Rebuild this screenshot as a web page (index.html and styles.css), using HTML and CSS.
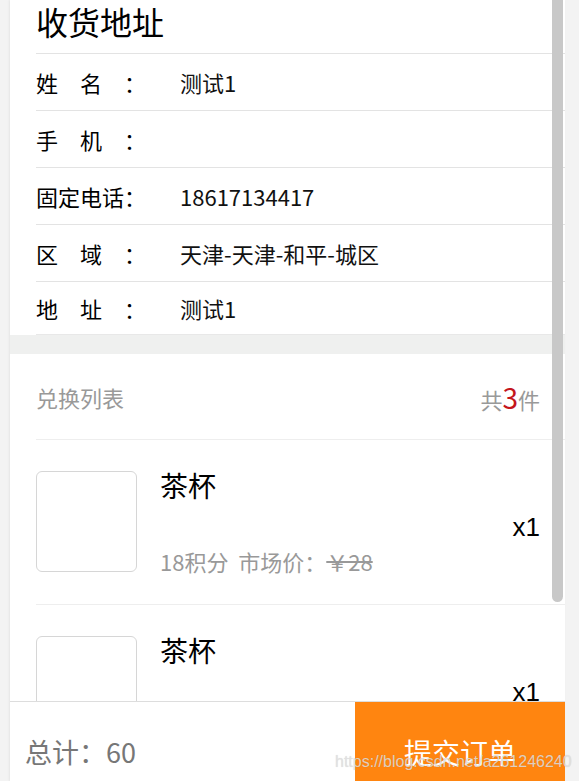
FILE: index.html
```html
<!DOCTYPE html>
<html lang="zh-CN">

<head>
    <meta charset="UTF-8">
    <meta name="viewport" content="width=device-width, initial-scale=1.0">
    <title>确认订单</title>
    <link rel="stylesheet" href="styles.css">
</head>

<body>
    <div class="page">
        <div class="content">
            <div class="address">
                <h2 class="title">收货地址</h2>
                <div class="row">
                    <span class="label">姓名：</span>
                    <span class="value">测试1</span>
                </div>
                <div class="row">
                    <span class="label">手机：</span>
                    <span class="value"></span>
                </div>
                <div class="row">
                    <span class="label">固定电话：</span>
                    <span class="value">18617134417</span>
                </div>
                <div class="row">
                    <span class="label">区域：</span>
                    <span class="value">天津-天津-和平-城区</span>
                </div>
                <div class="row last">
                    <span class="label">地址：</span>
                    <span class="value">测试1</span>
                </div>
            </div>

            <div class="gap"></div>

            <div class="goods">
                <div class="goods-head">
                    <span>兑换列表</span>
                    <span class="count">共<em>3</em>件</span>
                </div>
                <div class="item">
                    <div class="pic"></div>
                    <div class="info">
                        <p class="name">茶杯</p>
                        <p class="price">18积分&nbsp;&nbsp;市场价：<del>￥28</del></p>
                    </div>
                    <div class="num">x1</div>
                </div>
                <div class="item">
                    <div class="pic"></div>
                    <div class="info">
                        <p class="name">茶杯</p>
                        <p class="price">18积分&nbsp;&nbsp;市场价：<del>￥28</del></p>
                    </div>
                    <div class="num">x1</div>
                </div>
            </div>

            <div class="thumb"></div>
        </div>

        <div class="footer">
            <div class="total">总计：60</div>
            <button class="submit">提交订单</button>
        </div>
    </div>
    <div class="mark">https://blog.csdn.net/a261246240</div>
</body>

</html>
```

FILE: styles.css
```css
* {
    margin: 0;
    padding: 0;
    box-sizing: border-box;
}

body {
    position: relative;
    background-color: #f3f3f3;
    font-family: "Noto Sans CJK SC", "Noto Sans", sans-serif;
    color: #111;
}

.page {
    width: 555px;
    height: 781px;
    margin-left: 10px;
    background-color: #fff;
    box-shadow: -1px 0 2px rgba(0, 0, 0, 0.06);
    display: flex;
    flex-direction: column;
    overflow: hidden;
}

.content {
    position: relative;
    flex: 1;
    overflow: hidden;
}

.address {
    padding-left: 26px;
}

.title {
    height: 54px;
    padding-top: 1px;
    font-size: 32px;
    font-weight: normal;
    line-height: 40px;
    color: #000;
    border-bottom: 1px solid #e3e3e3;
}

.row {
    display: flex;
    align-items: center;
    height: 57px;
    font-size: 22px;
    border-bottom: 1px solid #e3e3e3;
}

.row.last {
    height: 53px;
    border-bottom-color: #e8e8e8;
}

.label {
    width: 110px;
    margin-right: 34px;
    color: #000;
    text-align: justify;
    text-align-last: justify;
}

.value {
    color: #111;
}

.gap {
    height: 19px;
    background-color: #eff0ef;
}

.goods {
    padding-left: 26px;
}

.goods-head {
    display: flex;
    justify-content: space-between;
    align-items: center;
    height: 86px;
    padding-right: 25px;
    font-size: 22px;
    color: #999;
    border-bottom: 1px solid #eee;
}

.count em {
    font-style: normal;
    font-size: 28px;
    color: #c4161c;
}

.item {
    display: flex;
    align-items: center;
    height: 165px;
    padding-right: 25px;
    padding-bottom: 2px;
    border-bottom: 1px solid #eee;
}

.pic {
    width: 101px;
    height: 101px;
    border: 1px solid #d6d6d6;
    border-radius: 6px;
}

.info {
    flex: 1;
    display: flex;
    flex-direction: column;
    justify-content: space-between;
    height: 110px;
    margin-left: 23px;
}

.name {
    font-size: 28px;
    color: #000;
    line-height: 38px;
}

.price {
    font-size: 22px;
    color: #999;
    line-height: 30px;
}

.price del {
    color: #999;
}

.num {
    padding-top: 12px;
    font-size: 26px;
    color: #000;
    font-family: "Liberation Sans", sans-serif;
}

.thumb {
    position: absolute;
    top: 0;
    right: 2px;
    width: 11px;
    height: 602px;
    background-color: #c8c8c8;
    border-radius: 0 0 6px 6px;
}

.footer {
    display: flex;
    justify-content: space-between;
    height: 80px;
    border-top: 1px solid #ddd;
    background-color: #fff;
}

.total {
    padding-left: 15px;
    padding-top: 30px;
    font-size: 27px;
    line-height: 40px;
    color: #777;
}

.submit {
    width: 210px;
    border: none;
    background-color: #ff8510;
    color: #fff;
    font-family: inherit;
    font-size: 28px;
    padding-top: 20px;
}

.mark {
    position: absolute;
    left: 335px;
    top: 753px;
    font-family: "Liberation Sans", sans-serif;
    font-size: 16px;
    color: rgba(225, 225, 225, 0.85);
    text-shadow: 0 0 1px rgba(0, 0, 0, 0.15);
    white-space: nowrap;
}
```
